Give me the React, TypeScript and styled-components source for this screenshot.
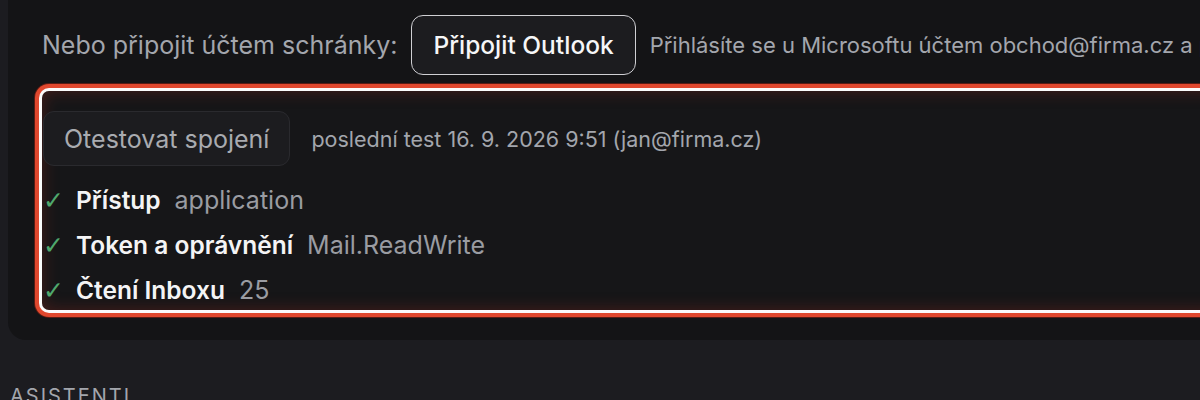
import React from "react";
import styled, { createGlobalStyle } from "styled-components";

const GlobalStyle = createGlobalStyle`
  html, body {
    margin: 0;
    padding: 0;
    background: #1c1c20;
    overflow: hidden;
  }
  body {
    font-family: Inter, "Noto Sans", sans-serif;
    -webkit-font-smoothing: antialiased;
  }
`;

const Page = styled.div`
  width: 1200px;
  height: 400px;
  overflow: hidden;
  padding-left: 8px;
  box-sizing: border-box;
`;

const Card = styled.section`
  width: 1400px;
  background: #141416;
  border-radius: 0 0 0 18px;
  padding: 15px 0 30px 34px;
  display: flex;
  flex-direction: column;
  gap: 16px;
`;

const ConnectRow = styled.div`
  display: flex;
  align-items: center;
  gap: 14px;
  white-space: nowrap;
`;

const RowLabel = styled.span`
  font-size: 25px;
  color: #a3a6ad;
`;

const OutlineButton = styled.button`
  height: 60px;
  padding: 0 21px;
  border-radius: 12px;
  border: 1.5px solid #cfcfd3;
  background: #1c1c1f;
  color: #f6f6f7;
  font-family: inherit;
  font-size: 24.5px;
  font-weight: 500;
  cursor: pointer;
`;

const Hint = styled.span`
  font-size: 22px;
  color: #a3a6ad;
`;

const TestPanel = styled.div`
  width: 1300px;
  padding: 20px 0 0 1px;
  border-radius: 7px;
  background: #161618;
  box-shadow: 0 0 0 3px #fbfbfb, 0 0 0 7px #e0482e, 0 0 0 8px #5a1c14,
    inset 0 0 16px rgba(150, 40, 30, 0.4);
  display: flex;
  flex-direction: column;
`;

const TestHeader = styled.div`
  display: flex;
  align-items: center;
  gap: 21px;
  margin-bottom: 14px;
`;

const GhostButton = styled.button`
  height: 55px;
  padding: 0 20px;
  border-radius: 11px;
  border: 1px solid #2a2a2e;
  background: #1c1c1f;
  color: #a9abb0;
  font-family: inherit;
  font-size: 25px;
  font-weight: 400;
`;

const LastTest = styled.span`
  font-size: 21.5px;
  color: #a3a6ad;
`;

const CheckList = styled.div`
  display: flex;
  flex-direction: column;
  gap: 5px;
`;

const CheckRow = styled.div`
  display: flex;
  align-items: center;
  height: 40px;
`;

const CheckMark = styled.span`
  width: 33px;
  color: #4fa86d;
  font-size: 25px;
  font-family: "DejaVu Sans", sans-serif;
  font-weight: 300;
`;

const CheckLabel = styled.span`
  font-size: 24.5px;
  font-weight: 600;
  color: #f4f4f5;
  margin-right: 14px;
`;

const CheckValue = styled.span`
  font-size: 25px;
  color: #9a9ca2;
`;

const SectionTitle = styled.h2`
  margin: 44px 0 0 2px;
  font-size: 20px;
  font-weight: 400;
  letter-spacing: 2px;
  color: #a3a6ad;
  text-transform: uppercase;
`;

const checks = [
  { label: "Přístup", value: "application" },
  { label: "Token a oprávnění", value: "Mail.ReadWrite" },
  { label: "Čtení Inboxu", value: "25" },
];

export default function App() {
  return (
    <Page>
      <GlobalStyle />
      <Card>
        <ConnectRow>
          <RowLabel>Nebo připojit účtem schránky:</RowLabel>
          <OutlineButton>Připojit Outlook</OutlineButton>
          <Hint>
            Přihlásíte se u Microsoftu účtem obchod@firma.cz a potvrdíte
            přístup ke schránce.
          </Hint>
        </ConnectRow>
        <TestPanel>
          <TestHeader>
            <GhostButton>Otestovat spojení</GhostButton>
            <LastTest>poslední test 16. 9. 2026 9:51 (jan@firma.cz)</LastTest>
          </TestHeader>
          <CheckList>
            {checks.map((c) => (
              <CheckRow key={c.label}>
                <CheckMark>✓</CheckMark>
                <CheckLabel>{c.label}</CheckLabel>
                <CheckValue>{c.value}</CheckValue>
              </CheckRow>
            ))}
          </CheckList>
        </TestPanel>
      </Card>
      <SectionTitle>Asistenti</SectionTitle>
    </Page>
  );
}
